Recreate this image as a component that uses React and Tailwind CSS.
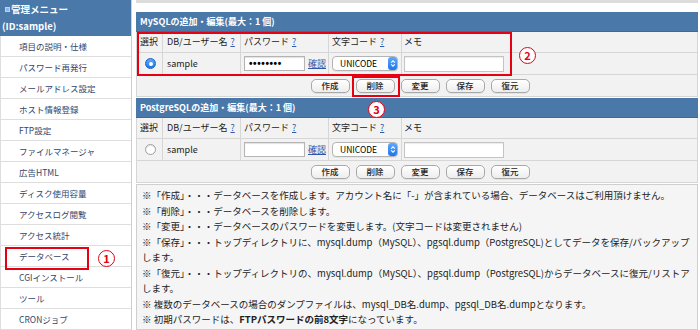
import React from "react";

const menu = [
  "項目の説明・仕様",
  "パスワード再発行",
  "メールアドレス設定",
  "ホスト情報登録",
  "FTP設定",
  "ファイルマネージャ",
  "広告HTML",
  "ディスク使用容量",
  "アクセスログ閲覧",
  "アクセス統計",
  "データベース",
  "CGIインストール",
  "ツール",
  "CRONジョブ",
];

function Radio({ checked }) {
  return checked ? (
    <span className="w-[11px] h-[11px] rounded-full bg-linear-to-b from-[#5ea8ff] to-[#1d74ea] border border-[#1a62c4] flex items-center justify-center">
      <span className="w-[4px] h-[4px] rounded-full bg-white" />
    </span>
  ) : (
    <span className="w-[11px] h-[11px] rounded-full bg-white border border-[#a0a0a0] shadow-[inset_0_1px_1px_rgba(0,0,0,0.12)]" />
  );
}

function Q() {
  return <span className="ml-[3px] text-[#2f56a8] underline">?</span>;
}

function Btn({ children }) {
  return (
    <div className="w-[39px] h-[14px] rounded-[5px] border border-[#a9a9a9] bg-linear-to-b from-white to-[#ededed] text-[8.5px] leading-none text-[#222] font-medium flex items-center justify-center shadow-[0_1px_0_rgba(0,0,0,0.06)]">
      {children}
    </div>
  );
}

function Section({ title, checked, filled, first }) {
  const cell = "border-r border-b border-[#d6d6d6] flex items-center";
  return (
    <div className={first ? "" : "mt-[1px]"}>
      <div className="h-[20px] bg-[#4a78a9] border-b border-[#3f6a98] text-white font-bold text-[9px] flex items-center pl-[4px]">
        {title}
      </div>
      <div className="grid grid-cols-[26px_78px_88px_73px_1fr] border-l border-[#d6d6d6] bg-[#f2f2f2] text-[9px] text-[#222]">
        <div className={`${cell} h-[21px] pl-[3px]`}>選択</div>
        <div className={`${cell} h-[21px] pl-[4px]`}>
          DB/ユーザー名
          <Q />
        </div>
        <div className={`${cell} h-[21px] pl-[3px]`}>
          パスワード
          <Q />
        </div>
        <div className={`${cell} h-[21px] pl-[3px]`}>
          文字コード
          <Q />
        </div>
        <div className={`${cell} h-[21px] pl-[2px]`}>メモ</div>

        <div className={`${cell} h-[22px] justify-center pl-[2px]`}>
          <Radio checked={checked} />
        </div>
        <div className={`${cell} h-[22px] pl-[4px]`}>sample</div>
        <div className={`${cell} h-[22px] pl-[3px]`}>
          <div className="w-[61px] h-[15px] bg-white border border-[#b4b4b4] shadow-[inset_0_1px_1px_rgba(0,0,0,0.12)] flex items-center pl-[4px] font-['Liberation_Sans',sans-serif] text-[10px] font-bold tracking-[0.6px] text-black leading-none">
            {filled ? "••••••••" : ""}
          </div>
          <span className="ml-[3px] text-[#2f56a8] underline">確認</span>
        </div>
        <div className={`${cell} h-[22px] pl-[3px]`}>
          <div className="w-[66px] h-[15px] rounded-[4px] border border-[#b4b4b4] bg-white flex items-center shadow-[0_1px_0_rgba(0,0,0,0.05)]">
            <span className="flex-1 pl-[7px] text-[8.5px] text-black">UNICODE</span>
            <span className="w-[9px] h-[13px] rounded-[3px] bg-linear-to-b from-[#5ea8ff] to-[#1d74ea] flex items-center justify-center">
              <svg width="6" height="9" viewBox="0 0 6 9">
                <path d="M1.2 3.6 L3 1.8 L4.8 3.6 M1.2 5.4 L3 7.2 L4.8 5.4" stroke="white" strokeWidth="1.1" fill="none" />
              </svg>
            </span>
          </div>
        </div>
        <div className={`${cell} h-[22px] pl-[2px]`}>
          <div className="w-[100px] h-[16px] bg-white border border-[#c4c4c4] shadow-[inset_0_1px_1px_rgba(0,0,0,0.08)]" />
        </div>
      </div>
      <div className="h-[22px] bg-[#f2f2f2] border-l border-r border-b border-[#d6d6d6] flex items-center justify-center gap-[6px] pl-[6px]">
        <Btn>作成</Btn>
        <Btn>削除</Btn>
        <Btn>変更</Btn>
        <Btn>保存</Btn>
        <Btn>復元</Btn>
      </div>
    </div>
  );
}

const notes = [
  "※「作成」・・・データベースを作成します。アカウント名に「-」が含まれている場合、データベースはご利用頂けません。",
  "※「削除」・・・データベースを削除します。",
  "※「変更」・・・データベースのパスワードを変更します。(文字コードは変更されません)",
  "※「保存」・・・トップディレクトリに、mysql.dump（MySQL）、pgsql.dump（PostgreSQL)としてデータを保存/バックアップ",
  "します。",
  "※「復元」・・・トップディレクトリの、mysql.dump（MySQL）、pgsql.dump（PostgreSQL)からデータベースに復元/リストア",
  "します。",
  "※ 複数のデータベースの場合のダンプファイルは、mysql_DB名.dump、pgsql_DB名.dumpとなります。",
];

function Circle({ n, className }) {
  return (
    <span
      className={`absolute w-[17px] h-[17px] rounded-full border-[1.5px] border-[#e60012] bg-white text-[#e60012] text-[11px] font-bold flex items-center justify-center leading-none ${className}`}
    >
      {n}
    </span>
  );
}

export default function App() {
  return (
    <div className="relative w-[700px] h-[330px] overflow-hidden flex bg-white font-['Noto_Sans_CJK_JP','Noto_Sans',sans-serif]">
      <aside className="w-[132px] shrink-0 flex flex-col border-r border-[#cfcfcf]">
        <div className="h-[37px] bg-[#4a78a9] text-white font-bold flex flex-col justify-center">
          <div className="flex items-center pl-[5px] text-[9.5px] leading-[17px]">
            <span className="w-[5px] h-[5px] bg-[#8db6e6] border border-[#b9d3f1] mr-[1px]" />
            管理メニュー
          </div>
          <div className="pl-[2px] text-[9.5px] leading-[17px]">(ID:sample)</div>
        </div>
        {menu.map((m) => (
          <div
            key={m}
            className="h-[21px] shrink-0 border-l border-b border-[#dedede] pl-[18px] flex items-center text-[8.5px] text-[#34466b]"
          >
            {m}
          </div>
        ))}
      </aside>

      <main className="flex-1 ml-[4px] mr-[2px] flex flex-col border-t-[3px] border-[#dcdcdc] pt-[9px]">
        <Section first title="MySQLの追加・編集(最大：1 個)" checked filled />
        <Section title="PostgreSQLの追加・編集(最大：1 個)" />
        <div className="flex-1 mt-[1px] bg-[#f5f5f5] border border-[#cfcfcf] pl-[5px] pt-[3px] text-[9.5px] leading-[15.5px] text-[#222]">
          {notes.map((t, i) => (
            <div key={i} className="whitespace-nowrap">
              {t}
            </div>
          ))}
          <div className="whitespace-nowrap">
            ※ 初期パスワードは、<b>FTPパスワードの前8文字</b>になっています。
          </div>
        </div>
      </main>

      <div className="absolute left-[5px] top-[247px] w-[84px] h-[23px] border-2 border-[#e60012]" />
      <div className="absolute left-[137px] top-[32px] w-[375px] h-[44px] border-2 border-[#e60012]" />
      <div className="absolute left-[352px] top-[76px] w-[48px] h-[21px] border-2 border-[#e60012]" />
      <Circle n="1" className="left-[98px] top-[250px]" />
      <Circle n="2" className="left-[519px] top-[47px]" />
      <Circle n="3" className="left-[368px] top-[101px]" />
    </div>
  );
}
